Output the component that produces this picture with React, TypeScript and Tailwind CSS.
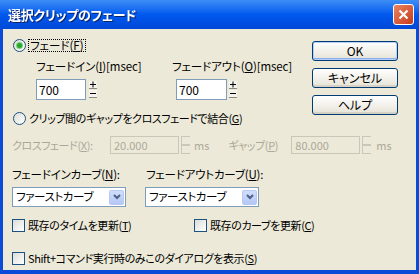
import React from 'react';

const FONT = "font-['Noto_Sans_CJK_JP','Noto_Sans',sans-serif] [font-feature-settings:'palt']";

function Radio({ checked }: { checked?: boolean }) {
  return (
    <span className="w-[13px] h-[13px] rounded-full border border-[#1C5180] bg-gradient-to-br from-[#DCDCD7] to-white flex items-center justify-center shrink-0">
      {checked && <span className="w-[5px] h-[5px] rounded-full bg-[#2AA82A] shadow-[0_0_0_1px_#7ED07E]" />}
    </span>
  );
}

function Check() {
  return (
    <span className="w-[13px] h-[13px] border border-[#1C5180] bg-gradient-to-br from-[#DCDCD7] to-white shrink-0" />
  );
}

function Spin({ disabled }: { disabled?: boolean }) {
  if (disabled) {
    return (
      <svg width="9" height="18" viewBox="0 0 9 18" className="block">
        <path d="M0.5 0 V18 M0 0.5 H9 M0 8.5 H9 M0 9.5 H9 M0 17.5 H9" stroke="#C9C7BA" strokeWidth="1" fill="none" />
      </svg>
    );
  }
  return (
    <svg width="8" height="17" viewBox="0 0 8 17" className="block">
      <rect x="0" y="0" width="8" height="8" fill="#F4F3EE" />
      <rect x="0" y="9" width="8" height="8" fill="#F4F3EE" />
      <path d="M0 7.5 H8 M0 16.5 H8" stroke="#8C8A80" strokeWidth="1" />
      <path d="M1 3.5 H7 M4 0.5 V6.5 M1 12.5 H7" stroke="#000" strokeWidth="1" />
    </svg>
  );
}

function Button({ label, primary }: { label: string; primary?: boolean }) {
  return (
    <div
      className={`h-[20px] w-[86px] rounded-[3px] border border-[#003C74] bg-gradient-to-b from-white to-[#E6E3D6] flex items-center justify-center text-[12px] tracking-normal text-black ${
        primary ? 'shadow-[inset_0_0_0_1px_#B8D0F8,inset_0_-1px_0_1px_#8AADEF]' : 'shadow-[inset_0_-2px_0_#D6D0C5]'
      }`}
    >
      {label}
    </div>
  );
}

function Select() {
  return (
    <div className="w-[114px] h-[20px] border border-[#7F9DB9] bg-white flex items-center justify-between pl-[3px] pr-[1px]">
      <span className="text-[11.5px] text-black">ファーストカーブ</span>
      <span className="w-[15px] h-[15px] rounded-[2px] bg-gradient-to-b from-[#D0DEFD] to-[#B4C8F6] border border-[#B7C9F2] flex items-center justify-center">
        <svg width="8" height="6" viewBox="0 0 8 6">
          <path d="M1 1 L4 4 L7 1" stroke="#4D6185" strokeWidth="2" fill="none" />
        </svg>
      </span>
    </div>
  );
}

export default function App() {
  return (
    <div className={`w-[419px] h-[274px] flex flex-col bg-[#0A4BD8] ${FONT}`}>
      {/* Title bar */}
      <div className="h-[29px] shrink-0 flex items-center justify-between pl-[8px] pr-[5px] bg-gradient-to-b from-[#3D8DF5] via-[#0058EE] to-[#0048D8]">
        <span className="text-white font-bold text-[13px] tracking-[-0.3px] drop-shadow-[1px_1px_0_#0A246A]">選択クリップのフェード</span>
        <span className="w-[21px] h-[21px] rounded-[3px] border border-white bg-gradient-to-br from-[#E9835E] to-[#C7371A] flex items-center justify-center">
          <svg width="11" height="11" viewBox="0 0 11 11">
            <path d="M1.5 1.5 L9.5 9.5 M9.5 1.5 L1.5 9.5" stroke="white" strokeWidth="2.2" />
          </svg>
        </span>
      </div>

      {/* Body */}
      <div className="flex-1 mx-[3px] mb-[4px] bg-[#ECE9D8] text-[11px] tracking-[-0.4px] text-black flex flex-col pl-[9px]">
        <div className="flex">
          <div className="flex flex-col w-[300px]">
            {/* Fade radio */}
            <div className="mt-[10px] h-[13px] flex items-center pl-[1px] gap-[2px]">
              <Radio checked />
              <span className="border border-dotted border-black px-[1px] leading-[11px] text-[11.5px] tracking-normal">
                フェード(<u>F</u>)
              </span>
            </div>
            {/* Labels */}
            <div className="mt-[9px] h-[12px] flex items-center leading-none text-[11.5px] tracking-[-0.1px]">
              <span className="ml-[24px] w-[136px]">フェードイン(<u>I</u>)[msec]</span>
              <span>フェードアウト(<u>O</u>)[msec]</span>
            </div>
            {/* Inputs */}
            <div className="mt-[6px] h-[21px] flex items-center tracking-normal">
              <div className="ml-[24px] w-[50px] h-[21px] border border-[#7F9DB9] bg-white text-[12px] pl-[2px] flex items-center">700</div>
              <div className="ml-[3px]"><Spin /></div>
              <div className="ml-[79px] w-[51px] h-[21px] border border-[#7F9DB9] bg-white text-[12px] pl-[2px] flex items-center">700</div>
              <div className="ml-[2px]"><Spin /></div>
            </div>
            {/* Cross fade radio */}
            <div className="mt-[12px] h-[13px] flex items-center pl-[1px] gap-[3px]">
              <Radio />
              <span>クリップ間のギャップをクロスフェードで結合(<u>G</u>)</span>
            </div>
          </div>
          <div className="mt-[12px] flex flex-col gap-[7px]">
            <Button label="OK" primary />
            <Button label="キャンセル" />
            <Button label="ヘルプ" />
          </div>
        </div>

        {/* Cross fade row */}
        <div className="mt-[11px] h-[18px] flex items-center text-[#ACA899]">
          <span className="w-[98px]">クロスフェード(<u>X</u>):</span>
          <div className="w-[69px] h-[18px] border border-[#C9C7BA] bg-[#ECE9D8] pl-[3px] flex items-center tracking-normal">20.000</div>
          <div className="ml-[2px]"><Spin disabled /></div>
          <span className="ml-[4px] tracking-normal">ms</span>
          <span className="ml-[19px] w-[63px]">ギャップ(<u>P</u>)</span>
          <div className="w-[69px] h-[18px] border border-[#C9C7BA] bg-[#ECE9D8] pl-[3px] flex items-center tracking-normal">80.000</div>
          <div className="ml-[2px]"><Spin disabled /></div>
          <span className="ml-[5px] tracking-normal">ms</span>
        </div>

        {/* Curve labels */}
        <div className="mt-[15px] h-[12px] flex items-center leading-none text-[11.5px] tracking-[-0.2px]">
          <span className="w-[134px]">フェードインカーブ(<u>N</u>):</span>
          <span>フェードアウトカーブ(<u>U</u>):</span>
        </div>
        <div className="mt-[6px] flex gap-[19px]">
          <Select />
          <Select />
        </div>

        {/* Checkboxes */}
        <div className="mt-[12px] h-[13px] flex items-center">
          <div className="flex items-center gap-[3px] w-[182px]">
            <Check />
            <span>既存のタイムを更新(<u>T</u>)</span>
          </div>
          <div className="flex items-center gap-[3px]">
            <Check />
            <span>既存のカーブを更新(<u>C</u>)</span>
          </div>
        </div>
        <div className="mt-[20px] h-[13px] flex items-center gap-[3px]">
          <Check />
          <span>Shift+コマンド実行時のみこのダイアログを表示(<u>S</u>)</span>
        </div>
      </div>
    </div>
  );
}
